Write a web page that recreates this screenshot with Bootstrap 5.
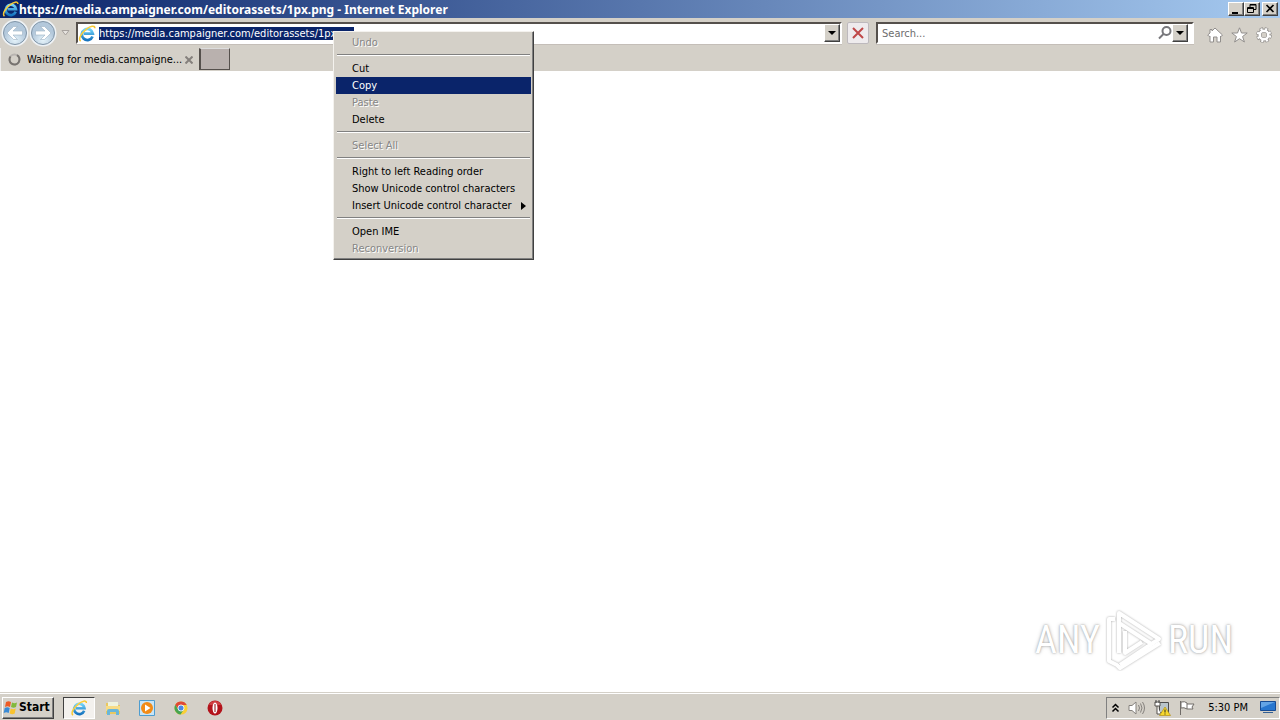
<!DOCTYPE html>
<html lang="en">
<head>
<meta charset="utf-8">
<meta name="viewport" content="width=device-width, initial-scale=1">
<title>https://media.campaigner.com/editorassets/1px.png - Internet Explorer</title>
<link href="https://cdn.jsdelivr.net/npm/bootstrap@5.3.0/dist/css/bootstrap.min.css" rel="stylesheet">
<style>
  :root { --face: #d4d0c8; --navy: #0a246a; }
  body { font: 11px/17px Tahoma, "DejaVu Sans Condensed", "DejaVu Sans", sans-serif; color: #000; background: #fff; }
  button { font: inherit; color: inherit; padding: 0; border: 0; background: none; }
  svg { display: block; flex: none; }
  .face { background: var(--face); }
  .raised { background: var(--face); border: 1px solid; border-color: #fff #404040 #404040 #fff; box-shadow: inset -1px -1px #808080; }
  .title-bar { height: 18px; background: linear-gradient(90deg, #0a246a, #a6caf0); color: #fff; font: bold 12px/17px "Noto Sans", sans-serif; padding: 0 2px; }
  .win-btn { width: 16px; height: 14px; }
  .close-btn { margin-left: 2px; }
  .nav-bar { height: 30px; padding: 0 8px 0 1px; }
  .field { height: 22px; background: #fff; border: 2px solid; border-color: #55504c #fff #fff #55504c; box-shadow: 0 1px #c4beb8; }
  .field input { border: 0; outline: 0; padding: 0; background: transparent; min-width: 0; height: 16px; }
  .field input::placeholder { color: #6d6d6d; opacity: 1; }
  .address { margin-left: 6px; }
  .address .url { flex: none; width: 255px; height: 13px; margin-left: 3px; background: var(--navy); color: #fff; }
  .arrow-btn { width: 16px; height: 18px; flex: none; }
  .stop-btn { width: 22px; height: 22px; margin: 0 7px 0 5px; background: #eeebed; border: 1px solid #bdb9bd; border-radius: 2px; }
  .search { width: 318px; margin-right: 13px; }
  .tab-strip { height: 23px; }
  .page-tab { width: 199px; gap: 6px; padding: 0 6px 0 7px; border-left: 1px solid #eee; }
  .page-tab a { min-width: 0; }
  .new-tab { width: 31px; height: 22px; background: #b9b1ae; border: 1px solid #55504c; border-top-color: #ddd; border-left-width: 2px; }
  .task-bar { height: 28px; border-top: 1px solid var(--face); box-shadow: inset 0 1px #fff; padding: 3px 0 1px 2px; }
  .start-btn { width: 52px; height: 22px; font-size: 12px; font-weight: bold; }
  .task-list { gap: 2px; margin-left: 9px; }
  .task-btn { width: 32px; height: 22px; }
  .task-btn.current { background: #f3f1ee; border: 1px solid; border-color: #404040 #fff #fff #404040; }
  .tray { width: 174px; height: 22px; border: 1px solid; border-color: #808080 #fff #fff #808080; padding: 0 3px 0 4px; }
  .context { position: absolute; left: 333px; top: 31px; width: 201px; padding: 2px; border: 1px solid; border-color: #f4f2ee #404040 #404040 #f4f2ee; box-shadow: inset -1px -1px #808080; z-index: 5; }
  .context button { display: flex; width: 100%; height: 17px; line-height: 17px; padding: 0 5px 0 16px; align-items: center; justify-content: space-between; }
  .context button.chosen { background: var(--navy); color: #fff; }
  .context button:disabled { color: #868686; text-shadow: 1px 1px #fff; }
  .context hr { margin: 3px 1px 4px; border: 0; height: 2px; opacity: 1; background: linear-gradient(#808080 50%, #fff 50%); }
  .watermark { right: 47px; bottom: 21px; gap: 4px; color: #fff; font: 38px/60px "Roboto Condensed", Roboto, sans-serif; text-shadow: 0 0 2px #999, 0 0 4px #ccc; }
</style>
</head>
<body class="d-flex flex-column vh-100 overflow-hidden">
<svg width="0" height="0" class="position-absolute">
  <defs>
    <linearGradient id="gold" x2="1" y2="1"><stop stop-color="#ffe25b"/><stop offset="1" stop-color="#eea800"/></linearGradient>
    <linearGradient id="sky" y2="1" x2="0"><stop stop-color="#72d4fb"/><stop offset="1" stop-color="#1674bf"/></linearGradient>
    <radialGradient id="disc" cy=".8"><stop stop-color="#e5f3fa"/><stop offset="1" stop-color="#b3c8db"/></radialGradient>
    <symbol id="ie" viewBox="0 0 16 16">
      <path d="M13.2 10.800A5.200 5.200 0 1 1 13.500 8.200H5" fill="none" stroke="url(#sky)" stroke-width="2.600"/>
      <path d="M2 15.2C-.5 13.3 2.500 7.500 7.500 3.800 11 1.100 15.400-.2 15.400 3" fill="none" stroke="url(#gold)" stroke-width="1.500"/>
    </symbol>
    <symbol id="down" viewBox="0 0 8 4"><path d="M0 0h8L4 4z"/></symbol>
  </defs>
</svg>

<header>
  <div class="title-bar d-flex align-items-center">
    <svg width="17" height="16"><use href="#ie"/></svg>
    <span class="flex-grow-1 text-nowrap">https://media.campaigner.com/editorassets/1px.png - Internet Explorer</span>
    <button class="win-btn raised" aria-label="Minimize"><svg width="14" height="12"><path d="M3 9h6v2H3z"/></svg></button>
    <button class="win-btn raised" aria-label="Restore"><svg width="14" height="12" fill="none" stroke="#000"><path d="M5 4.500V1.500h6v5H9M2.500 4.500h6v5h-6zM5 2h6M2.500 5.500h6"/></svg></button>
    <button class="win-btn close-btn raised" aria-label="Close"><svg width="14" height="12" stroke="#000" stroke-width="1.700"><path d="M3.500 2l7 7M10.500 2l-7 7"/></svg></button>
  </div>

  <nav class="nav-bar face d-flex align-items-center">
    <button aria-label="Back"><svg width="28" height="28" viewBox="0 0 28 28"><circle cx="14" cy="14" r="13.500" fill="#eef2f5"/><circle cx="14" cy="14" r="11.500" fill="url(#disc)" stroke="#8095a8"/><path d="M6 14l6.500-6.500h4L12 12h9.500v4H12l4.500 4.500h-4z" fill="#fff" stroke="#9cb2c4" stroke-width=".6"/></svg></button>
    <button aria-label="Forward"><svg width="28" height="28" viewBox="0 0 28 28"><circle cx="14" cy="14" r="13.500" fill="#eef2f5"/><circle cx="14" cy="14" r="11.500" fill="url(#disc)" stroke="#8095a8"/><path d="M22 14l-6.500-6.500h-4L16 12H6.500v4H16l-4.500 4.500h4z" fill="#fff" stroke="#9cb2c4" stroke-width=".6"/></svg></button>
    <button class="ms-1" aria-label="Recent pages"><svg width="9" height="6" fill="#e6e3df" stroke="#a7a29e"><path d="M1 .5h7L4.500 5z"/></svg></button>
    <div class="field address d-flex align-items-center flex-grow-1">
      <svg width="18" height="17"><use href="#ie"/></svg>
      <input class="url" aria-label="Address" value="https://media.campaigner.com/editorassets/1px.png">
      <button class="arrow-btn raised ms-auto d-flex align-items-center justify-content-center" aria-label="Show addresses"><svg width="8" height="4"><use href="#down"/></svg></button>
    </div>
    <button class="stop-btn d-flex align-items-center justify-content-center" aria-label="Stop"><svg width="12" height="12" stroke="#bf4848" stroke-width="2"><path d="M1 1l10 10M11 1L1 11"/></svg></button>
    <div class="field search d-flex align-items-center">
      <input class="flex-grow-1 ms-1" type="text" aria-label="Search" placeholder="Search...">
      <svg width="14" height="14" fill="none" stroke="#77777b" stroke-width="2"><circle cx="8.500" cy="5" r="4"/><path d="M5.500 8L1 12.500"/></svg>
      <button class="arrow-btn raised d-flex align-items-center justify-content-center me-1" aria-label="Search options"><svg width="8" height="4"><use href="#down"/></svg></button>
    </div>
    <div class="d-flex align-items-center gap-2 mt-1">
      <button aria-label="Home"><svg width="16" height="16" fill="#fff" stroke="#918e8c"><path d="M8 1l7.500 7-1.500 1.500-.5-.5v6H10v-5H6.500v5H3V9l-.8.5L.7 8 3 6V2.500h2V4z"/></svg></button>
      <button aria-label="Favorites"><svg width="17" height="16" fill="#fff" stroke="#918e8c"><path d="M8.500.8l2 5.200h5.700l-4.600 3.500 1.800 5.500-4.900-3.300L3.600 15l1.800-5.500L.8 6h5.700z"/></svg></button>
      <button aria-label="Tools"><svg width="16" height="16" viewBox="0 0 16 16" fill="none"><circle cx="8" cy="8" r="6.300" stroke="#8e8b89" stroke-width="3" stroke-dasharray="3.200 1.750"/><circle cx="8" cy="8" r="4.500" stroke="#8e8b89" stroke-width="4"/><circle cx="8" cy="8" r="6" stroke="#fff" stroke-width="2.400" stroke-dasharray="2 2.710" stroke-dashoffset="-.5"/><circle cx="8" cy="8" r="4.300" stroke="#fff" stroke-width="2.500"/></svg></button>
    </div>
  </nav>

  <div class="tab-strip face d-flex">
    <div class="page-tab d-flex align-items-center">
      <svg width="13" height="13" fill="none" stroke-width="2"><circle cx="6.500" cy="6.500" r="5" stroke="#b8b4b0"/><path d="M9 2.200a5 5 0 1 1-6.500 1.300" stroke="#77736f"/></svg>
      <a href="#" class="flex-grow-1 text-black text-decoration-none text-nowrap">Waiting for media.campaigne...</a>
      <button aria-label="Close tab"><svg width="8" height="8" stroke="#85807c" stroke-width="2"><path d="M.5.5l7 7M7.500.5l-7 7"/></svg></button>
    </div>
    <button class="new-tab" aria-label="New tab"></button>
  </div>
</header>

<main class="flex-grow-1 position-relative">
  <div class="watermark position-absolute d-flex align-items-center" aria-label="ANY RUN">
    <span>ANY</span>
    <svg width="60" height="62" viewBox="0 0 60 62" fill="none" stroke-linejoin="round">
      <g style="filter:drop-shadow(0 0 1px #aaa)" stroke="#fff" stroke-width="4">
        <path d="M15 44V4l40 26-39 26M15 14l34 22M21 22v22l17-11"/>
        <path d="M11 10H5v42l8 4 3 3 40-25"/>
      </g>
    </svg>
    <span>RUN</span>
  </div>
</main>

<footer class="task-bar face d-flex align-items-center">
  <button class="start-btn raised d-flex align-items-center">
    <svg width="16" height="16" viewBox="0 0 16 16"><path d="M3 2c2-1 3-1 5 0L7 7C5 6 4 6 2 7z" fill="#ed5b25"/><path d="M9 2.500c2 1 3 1 5 0L13 7c-2 1-3 1-5 0z" fill="#82b93c"/><path d="M1.700 8c2-1 3-1 5 0l-1 5c-2-1-3-1-5 0z" fill="#398ad6"/><path d="M7.700 8.500c2 1 3 1 5 0l-1 5c-2 1-3 1-5 0z" fill="#f9c32f"/></svg>
    <span>Start</span>
  </button>
  <div class="task-list d-flex">
    <button class="task-btn current d-flex align-items-center justify-content-center" aria-label="Internet Explorer"><svg width="16" height="16"><use href="#ie"/></svg></button>
    <button class="task-btn d-flex align-items-center justify-content-center" aria-label="File Explorer"><svg width="16" height="16"><path d="M1 3h5l1 2h8v9H1z" fill="#e9c861"/><path d="M3 2h10v6H3z" fill="#eff3dd"/><path d="M1 6h14v5H1z" fill="#f7dc86"/><path d="M2 15v-4q0-2 2-2h8q2 0 2 2v4h-3v-3H5v3z" fill="#69b6d9"/></svg></button>
    <button class="task-btn d-flex align-items-center justify-content-center" aria-label="Media Player"><svg width="16" height="16"><path d="M.5.5h15v15H.5z" fill="#c8e5f7" stroke="#4e9dd0"/><circle cx="8" cy="8" r="6" fill="#f28b17"/><path d="M6 4.500L11.500 8 6 11.500z" fill="#fff"/></svg></button>
    <button class="task-btn d-flex align-items-center justify-content-center" aria-label="Chrome"><svg width="14" height="14" viewBox="0 0 16 16"><circle cx="8" cy="8" r="7.500" fill="#f9cf35"/><path d="M1.500 4.300A7.500 7.500 0 0 1 14.500 4.500H8L5 10z" fill="#df4936"/><path d="M1.500 4.300A7.500 7.500 0 0 0 7.500 15.500L11 10 5 10z" fill="#46a451"/><circle cx="8" cy="8" r="3.500" fill="#4b87e3" stroke="#fff"/></svg></button>
    <button class="task-btn d-flex align-items-center justify-content-center" aria-label="Opera"><svg width="16" height="16"><circle cx="8" cy="8" r="7.500" fill="#b3131b"/><path d="M2 5a6.500 6.500 0 0 1 12 0z" fill="#cf3f42"/><ellipse cx="8" cy="8" rx="2.500" ry="5.500" fill="#fff"/><path d="M7.500 4h1v8h-1z" fill="#8c0d12"/></svg></button>
  </div>
  <div class="tray d-flex align-items-center ms-auto">
    <button aria-label="Show hidden icons"><svg width="9" height="10" fill="none" stroke="#000" stroke-width="1.500"><path d="M1.500 4.500l3-3 3 3M1.500 8.500l3-3 3 3"/></svg></button>
    <svg width="18" height="16" class="ms-2" fill="#fff" stroke="#85817d"><path d="M1 5.500h3L8 2v12l-4-3.500H1z"/><path d="M10.500 5q2 3 0 6M12.500 3.500q3 4.500 0 9M14.500 2q4 6 0 12" fill="none"/></svg>
    <svg width="17" height="16" class="ms-2"><path d="M5.500 2.500h9v10h-9z" fill="#b8c4ca" stroke="#4c4c4c"/><path d="M1 2h5v4H1zM3 6v8h4" fill="#fff" stroke="#55514d"/><path d="M2 0v3M5 0v3" stroke="#444"/><path d="M11 7l5.500 8.500h-11z" fill="#f7d82e" stroke="#b49112" stroke-width=".7"/><path d="M11 9.500v3M11 13.500v1" stroke="#222"/></svg>
    <svg width="17" height="16" class="ms-2" fill="#fff" stroke="#706c68"><path d="M1.500 1v14M2 2q4-1 6 1v6q-3-2-6-1zM8 4h7l-2 3 1 2H8"/></svg>
    <span class="ms-auto me-2 text-nowrap">5:30 PM</span>
    <button class="ms-1" aria-label="Show desktop"><svg width="16" height="13"><path d="M.5.5h15v9H.5z" fill="#2776cf" stroke="#164b94"/><path d="M1 1h14L1 7z" fill="#63a4e6"/><path d="M3 11h10v1H3z" fill="#345f93"/></svg></button>
  </div>
</footer>

<div class="context face" role="menu">
  <button role="menuitem" disabled>Undo</button>
  <hr>
  <button role="menuitem">Cut</button>
  <button role="menuitem" class="chosen">Copy</button>
  <button role="menuitem" disabled>Paste</button>
  <button role="menuitem">Delete</button>
  <hr>
  <button role="menuitem" disabled>Select All</button>
  <hr>
  <button role="menuitem">Right to left Reading order</button>
  <button role="menuitem">Show Unicode control characters</button>
  <button role="menuitem">Insert Unicode control character <svg width="5" height="8"><path d="M0 0l5 4-5 4z"/></svg></button>
  <hr>
  <button role="menuitem">Open IME</button>
  <button role="menuitem" disabled>Reconversion</button>
</div>
<script src="https://cdn.jsdelivr.net/npm/bootstrap@5.3.0/dist/js/bootstrap.bundle.min.js"></script>
</body>
</html>
